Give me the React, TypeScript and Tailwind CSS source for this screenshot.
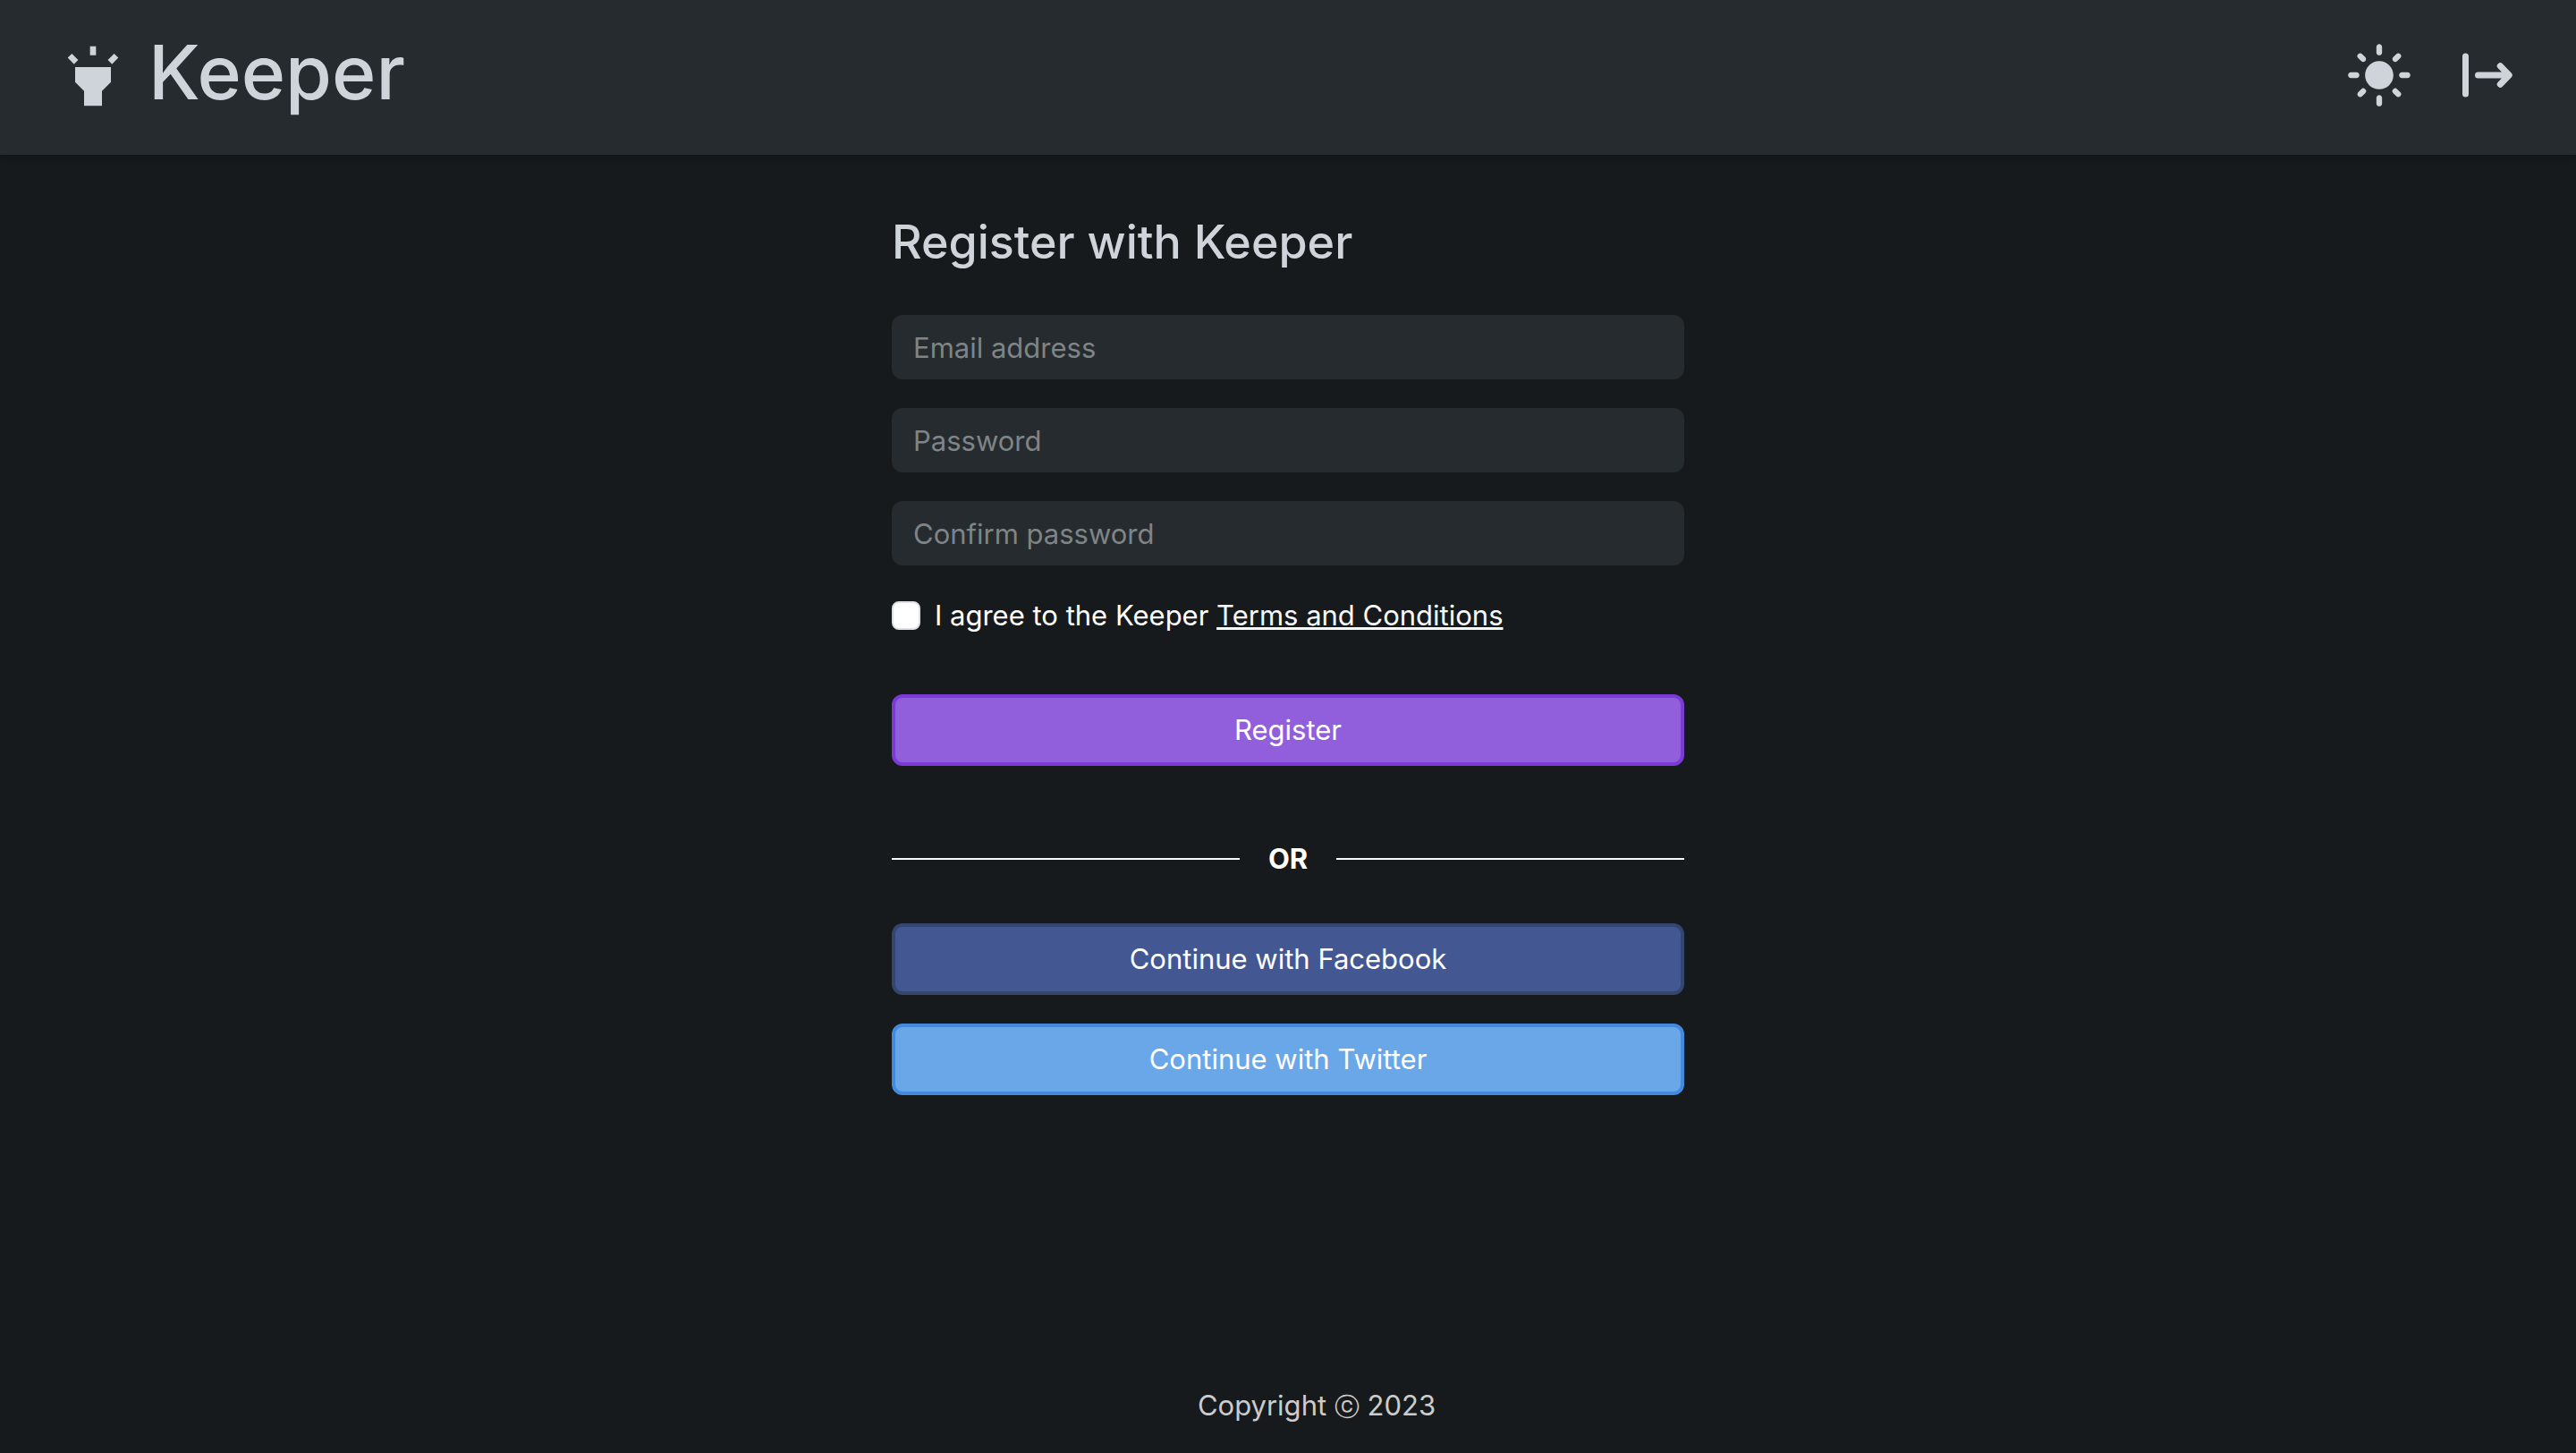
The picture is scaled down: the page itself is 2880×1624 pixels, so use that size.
import type { ReactNode } from "react";
import { MdHighlight, MdLightMode } from "react-icons/md";

function LeaveIcon() {
  return (
    <svg
      viewBox="0 0 76 76"
      className="size-[76px]"
      fill="none"
      stroke="currentColor"
      strokeWidth="7"
      strokeLinecap="round"
      strokeLinejoin="round"
      aria-hidden="true"
    >
      <path d="M13.5 17v42M27.5 38H61M52.3 27.7L62.2 38l-9.9 10.3" />
    </svg>
  );
}

function Field({ type, label }: { type: string; label: string }) {
  return (
    <input
      type={type}
      aria-label={label}
      placeholder={label}
      className="block h-[72px] w-full rounded-xl bg-[#262b2f] px-6 text-white outline-none placeholder:text-[#7f8487]"
    />
  );
}

function WideButton({ className, children }: { className: string; children: ReactNode }) {
  return (
    <button type="button" className={`block h-20 w-full rounded-xl border-4 text-white ${className}`}>
      {children}
    </button>
  );
}

export default function App() {
  return (
    <div className="flex min-h-screen flex-col bg-[#171a1d] font-['Inter',sans-serif] text-[31px] leading-[50px] text-white">
      <header className="flex h-[173px] items-start justify-between bg-[#262b2f] pr-[61px] pl-16 text-[#ced4da] shadow-[0_4px_8px_rgba(0,0,0,0.2)]">
        <a href="#" className="flex items-start gap-[22px] pt-[45px]">
          <MdHighlight className="size-20" aria-hidden="true" />
          <span className="-mt-2 text-[84px] leading-[88px] font-medium">Keeper</span>
        </a>
        <nav className="flex gap-[45px] pt-[46px]">
          <button type="button" aria-label="Switch theme">
            <MdLightMode className="size-[76px]" />
          </button>
          <button type="button" aria-label="Log in">
            <LeaveIcon />
          </button>
        </nav>
      </header>

      <main className="mx-auto w-full max-w-[886px] flex-1 pt-16">
        <h1 className="mb-12 text-[52px] leading-[67px] font-medium text-[#ced4da]">Register with Keeper</h1>
        <form>
          <div className="flex flex-col gap-8">
            <Field type="email" label="Email address" />
            <Field type="password" label="Password" />
            <Field type="password" label="Confirm password" />
          </div>
          <div className="mt-[31px] flex items-center gap-4">
            <input
              id="terms"
              type="checkbox"
              className="size-8 appearance-none rounded-lg border-2 border-[#dee2e6] bg-white checked:bg-[#925fdc]"
            />
            <label htmlFor="terms">
              I agree to the Keeper{" "}
              <a href="#" className="text-[#f8f9fa] underline">
                Terms and Conditions
              </a>
            </label>
          </div>
          <div className="mt-[63px]">
            <WideButton className="border-[#7a3ad6] bg-[#925fdc]">Register</WideButton>
          </div>
        </form>
        <div className="mt-[79px] mb-[47px] flex items-center gap-8">
          <span className="h-0.5 flex-1 bg-[#f8f9fa]" />
          <span className="font-bold">OR</span>
          <span className="h-0.5 flex-1 bg-[#f8f9fa]" />
        </div>
        <div className="flex flex-col gap-8">
          <WideButton className="border-[#34466f] bg-[#435892]">Continue with Facebook</WideButton>
          <WideButton className="border-[#428ae0] bg-[#69a7e8]">Continue with Twitter</WideButton>
        </div>
      </main>

      <footer className="pb-[27px] pl-16 text-center text-[#cccccc]">
        Copyright <span className="text-[28px]">ⓒ</span> 2023
      </footer>
    </div>
  );
}
